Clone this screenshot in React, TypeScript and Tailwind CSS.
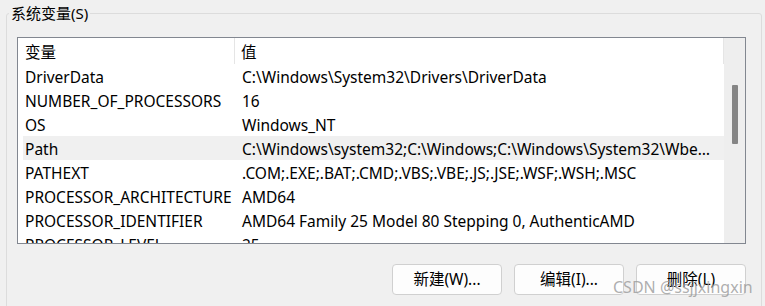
const rows: [string, string][] = [
  ["DriverData", "C:\\Windows\\System32\\Drivers\\DriverData"],
  ["NUMBER_OF_PROCESSORS", "16"],
  ["OS", "Windows_NT"],
  [
    "Path",
    "C:\\Windows\\system32;C:\\Windows;C:\\Windows\\System32\\Wbem;C:\\Windows\\System32\\WindowsPowerShell\\v1.0\\",
  ],
  ["PATHEXT", ".COM;.EXE;.BAT;.CMD;.VBS;.VBE;.JS;.JSE;.WSF;.WSH;.MSC"],
  ["PROCESSOR_ARCHITECTURE", "AMD64"],
  ["PROCESSOR_IDENTIFIER", "AMD64 Family 25 Model 80 Stepping 0, AuthenticAMD"],
  ["PROCESSOR_LEVEL", "25"],
];

const selected = "Path";

export default function App() {
  return (
    <div className="relative w-[765px] h-[306px] overflow-hidden bg-[#f0f0f0] pt-[13px] pl-[6px] font-['Noto_Sans','Noto_Sans_CJK_SC',sans-serif] text-[15.5px] text-black">
      <div className="relative w-[756px] h-[320px] rounded-[3px] border border-[#dcdcdc] pt-[23px] pl-[10px]">
        <span className="absolute -top-[11px] left-[2px] bg-[#f0f0f0] px-[2px] text-[15px] leading-[20px]">
          系统变量(S)
        </span>

        <div className="flex w-[729px] h-[207px] border border-[#828790] bg-white">
          <div className="flex-1 min-w-0 overflow-hidden">
            <div className="flex h-[26px]">
              <div className="w-[217px] h-full flex items-center pt-[4px] pl-[7px] border-r border-[#e5e5e5]">
                变量
              </div>
              <div className="flex-1 h-full flex items-center pt-[4px] pl-[6px] border-r border-[#e5e5e5]">
                值
              </div>
            </div>
            {rows.map(([name, value]) => (
              <div
                key={name}
                className={`ml-[5px] flex h-[24px] items-center pt-[4px] ${
                  name === selected ? "bg-[#f0f0f0]" : ""
                }`}
              >
                <div className="w-[218px] shrink-0 pl-[2px] whitespace-nowrap overflow-hidden">
                  {name}
                </div>
                <div className="flex-1 min-w-0 pl-[1px] pr-[6px] truncate">
                  {value}
                </div>
              </div>
            ))}
          </div>
          <div className="w-[21px] h-full bg-[#eeeeee] pt-[47px] flex justify-center">
            <div className="w-[6px] h-[59px] bg-[#858585] rounded-[1px]" />
          </div>
        </div>

        <div className="mt-[20px] flex w-[729px] justify-end gap-[12px]">
          {["新建(W)...", "编辑(I)...", "删除(L)"].map((label) => (
            <button
              key={label}
              className="w-[110px] h-[31px] rounded-[4px] border border-[#d0d0d0] bg-[#fdfdfd] text-[15.5px]"
            >
              {label}
            </button>
          ))}
        </div>
      </div>

      <span className="absolute left-[613px] top-[277px] text-[16px] leading-[20px] text-[#9a9a9a]/80">
        CSDN @ssjjxingxin
      </span>
    </div>
  );
}
